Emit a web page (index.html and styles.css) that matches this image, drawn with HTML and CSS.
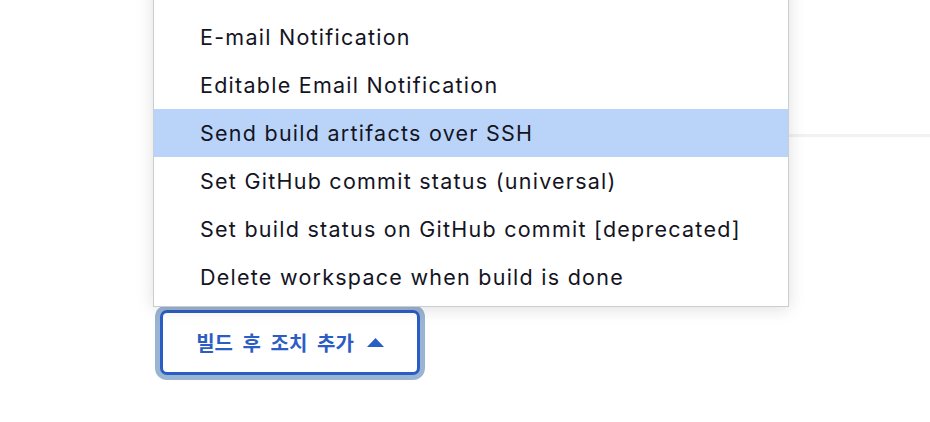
FILE: index.html
```html
<!DOCTYPE html>
<html lang="ko">
<head>
<meta charset="utf-8">
<link rel="stylesheet" href="styles.css">
</head>
<body>
<div class="page">
  <div class="divider"></div>
  <div class="action-wrap">
    <ul class="menu">
      <li class="menu-item">E-mail Notification</li>
      <li class="menu-item">Editable Email Notification</li>
      <li class="menu-item is-active">Send build artifacts over SSH</li>
      <li class="menu-item">Set GitHub commit status (universal)</li>
      <li class="menu-item">Set build status on GitHub commit [deprecated]</li>
      <li class="menu-item">Delete workspace when build is done</li>
    </ul>
    <button class="add-btn" type="button">
      <span class="add-label">빌드 후 조치 추가</span>
      <svg class="caret" width="17" height="9" viewBox="0 0 17 9"><path d="M8.5 0 L17 9 L0 9 Z" fill="currentColor"/></svg>
    </button>
  </div>
</div>
</body>
</html>
```
FILE: styles.css
```css
html, body {
  margin: 0;
  padding: 0;
  background: #ffffff;
}
.page {
  width: 930px;
  height: 422px;
  overflow: hidden;
  display: flex;
  flex-direction: column;
  align-items: flex-start;
}
.divider {
  margin-top: 134px;
  margin-left: 400px;
  width: 530px;
  height: 3px;
  background: #f1f1f4;
}
.action-wrap {
  position: relative;
  margin-top: 173px;
  margin-left: 160px;
}
.menu {
  position: absolute;
  left: -7px;
  bottom: calc(100% + 3px);
  width: 636px;
  box-sizing: border-box;
  margin: 0;
  padding: 30px 0 5px;
  list-style: none;
  background: #ffffff;
  border: 1px solid #c8ced4;
  box-shadow: 0 2px 16px rgba(0, 0, 0, 0.13);
  z-index: 2;
}
.menu-item {
  height: 48px;
  display: flex;
  align-items: center;
  padding-left: 46px;
  font-family: Inter, "Noto Sans", sans-serif;
  font-size: 21.5px;
  letter-spacing: 1.25px;
  color: #14141f;
  white-space: nowrap;
}
.menu-item.is-active {
  background: #bad4f9;
}
.add-btn {
  width: 260px;
  height: 65px;
  box-sizing: border-box;
  display: flex;
  align-items: center;
  justify-content: center;
  gap: 13px;
  margin: 0;
  padding: 0;
  background: #ffffff;
  border: 3px solid #2b5ec4;
  border-radius: 7px;
  box-shadow: 0 0 0 5px #9ab4d4;
  color: #2b5ec4;
  cursor: pointer;
}
.add-label {
  font-family: "Noto Sans CJK KR", sans-serif;
  font-weight: 700;
  font-size: 20px;
  word-spacing: 4px;
  line-height: 1;
}
.caret {
  display: block;
  margin-top: -1px;
}
```
